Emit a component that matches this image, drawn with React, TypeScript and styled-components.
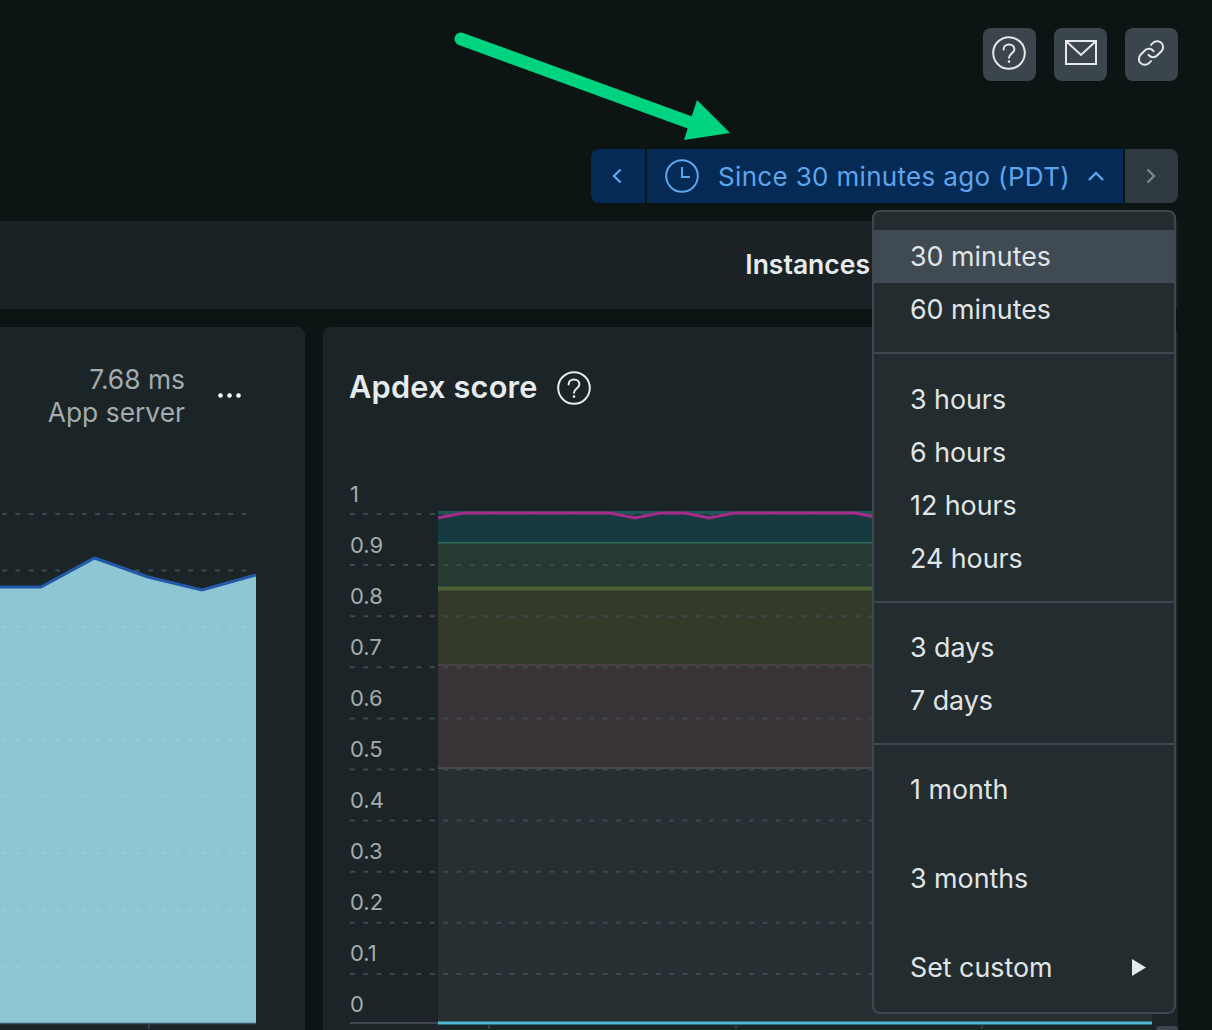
import styled, { createGlobalStyle } from "styled-components";

const GlobalStyle = createGlobalStyle`
  html, body {
    margin: 0;
    padding: 0;
    background: #0d1414;
  }
  * {
    box-sizing: border-box;
  }
`;

const Page = styled.div`
  position: relative;
  width: 1212px;
  height: 1030px;
  overflow: hidden;
  padding: 28px 34px 0 0;
  background: #0d1414;
  font-family: Inter, "Liberation Sans", sans-serif;
`;

const Toolbar = styled.div`
  display: flex;
  justify-content: flex-end;
  gap: 18px;
`;

const IconButton = styled.button`
  display: flex;
  align-items: center;
  justify-content: center;
  width: 53px;
  height: 53px;
  padding: 0 2px 3px 0;
  border: 0;
  border-radius: 8px;
  background: #3b454c;
  color: #e6e9ea;
`;

const PickerRow = styled.div`
  position: relative;
  display: flex;
  justify-content: flex-end;
  gap: 2px;
  margin-top: 68px;
  height: 54px;
`;

const Segment = styled.div<{ $dim?: boolean; $left?: boolean; $right?: boolean }>`
  display: flex;
  align-items: center;
  justify-content: center;
  width: ${(p) => (p.$left ? "54px" : "53px")};
  padding-right: 2px;
  background: ${(p) => (p.$dim ? "#2f3940" : "#042a55")};
  color: ${(p) => (p.$dim ? "#7b858a" : "#5ea5ec")};
  border-radius: ${(p) => (p.$left ? "8px 0 0 8px" : p.$right ? "0 8px 8px 0" : "0")};
`;

const RangeButton = styled.div`
  display: flex;
  align-items: center;
  width: 476px;
  padding-left: 18px;
  background: #042a55;
  color: #5ea5ec;
`;

const RangeLabel = styled.span`
  margin: 2px 17px 0 19px;
  font-size: 26px;
  letter-spacing: 0.33px;
  line-height: 52px;
  white-space: nowrap;
`;

const Subnav = styled.div`
  display: flex;
  align-items: center;
  justify-content: flex-end;
  height: 88px;
  margin-top: 18px;
  padding: 0 308px 2px 0;
  background: #1a2226;
`;

const SubnavLabel = styled.span`
  font-size: 26.5px;
  font-weight: 600;
  color: #e8ebec;
`;

const Cards = styled.div`
  display: grid;
  grid-template-columns: 305px 855px;
  gap: 18px;
  margin-top: 18px;
`;

const Card = styled.section<{ $first?: boolean }>`
  height: 720px;
  background: #1b2427;
  border-radius: ${(p) => (p.$first ? "0 8px 0 0" : "8px 8px 0 0")};
`;

const CardHeader = styled.header<{ $end?: boolean }>`
  display: flex;
  justify-content: ${(p) => (p.$end ? "flex-end" : "flex-start")};
  gap: ${(p) => (p.$end ? "33px" : "19px")};
  height: 143px;
  padding: ${(p) => (p.$end ? "36px 64px 0 0" : "42px 0 0 26px")};
  color: #e8ebec;
`;

const Metric = styled.div`
  font-size: 26.4px;
  line-height: 32.5px;
  text-align: right;
  color: #a3abae;
`;

const MoreDots = styled.svg`
  margin-top: 30px;
  flex: none;
`;

const CardTitle = styled.h2`
  margin: 0;
  font-size: 30.7px;
  letter-spacing: 0.2px;
  line-height: 36px;
  font-weight: 600;
`;

const TitleIcon = styled.span`
  display: flex;
  margin-top: 2px;
`;

const Chart = styled.svg`
  display: block;
`;

const AxisLabel = styled.text`
  font-family: Inter, "Liberation Sans", sans-serif;
  font-size: 22px;
  fill: #a3abae;
`;

const Menu = styled.div`
  position: absolute;
  top: 61px;
  right: 2px;
  width: 304px;
  height: 804px;
  background: #232c2f;
  border: 2px solid #3d4850;
  border-radius: 8px;
  overflow: hidden;
  color: #e1e5e6;
`;

const MenuGroup = styled.div<{ $last?: boolean }>`
  padding: ${(p) => (p.$last ? "0" : "18px 0 16px")};
  border-bottom: ${(p) => (p.$last ? "0" : "2px solid #3d4850")};

  &:nth-child(2) {
    padding-top: 19px;
  }
`;

const MenuItem = styled.div<{ $active?: boolean; $tall?: boolean }>`
  display: flex;
  align-items: center;
  justify-content: space-between;
  height: ${(p) => (p.$tall ? "89px" : "53px")};
  padding: 0 28px 2px 36px;
  font-size: 26.8px;
  background: ${(p) => (p.$active ? "#3f4a52" : "transparent")};
`;

const Caret = styled.svg`
  margin-top: 2px;
`;

const Arrow = styled.svg`
  position: absolute;
  top: 0;
  left: 0;
  pointer-events: none;
`;

const groups = [
  ["30 minutes", "60 minutes"],
  ["3 hours", "6 hours", "12 hours", "24 hours"],
  ["3 days", "7 days"],
];

const appGrid = [514, 570.6, 627, 683.7, 740, 796.8, 853, 910, 966.6];
const apdexLabels = ["1", "0.9", "0.8", "0.7", "0.6", "0.5", "0.4", "0.3", "0.2", "0.1", "0"];
const appArea = "M0 587H41L94.5 558L148 577L202 590L256 575";

function HelpIcon() {
  return (
    <svg width="34" height="34" viewBox="0 0 34 34" fill="none" stroke="currentColor" strokeWidth="2">
      <circle cx="17" cy="17" r="15.8" />
      <path d="M11.6 13.4c0-3 2.4-5 5.4-5s5.4 2 5.4 4.8c0 4.2-5.4 4.4-5.4 8.6" strokeLinecap="round" />
      <circle cx="17" cy="25.6" r="1.3" fill="currentColor" stroke="none" />
    </svg>
  );
}

export default function App() {
  return (
    <Page>
      <GlobalStyle />
      <Toolbar>
        <IconButton>
          <HelpIcon />
        </IconButton>
        <IconButton>
          <svg width="34" height="26" viewBox="-2 0 34 26" fill="none" stroke="currentColor" strokeWidth="2">
            <rect x="1" y="1" width="30" height="23" />
            <path d="M1 1l15 14L31 1" />
          </svg>
        </IconButton>
        <IconButton>
          <svg width="30" height="30" viewBox="0 0 24 24" fill="none" stroke="currentColor" strokeWidth="1.6" strokeLinecap="round" strokeLinejoin="round">
            <path d="M10 13.5a4.6 4.6 0 0 0 6.9.5l3.4-3.4a4.7 4.7 0 0 0-6.7-6.7l-1.6 1.6" />
            <path d="M14 10.5a4.6 4.6 0 0 0-6.9-.5l-3.4 3.4a4.7 4.7 0 0 0 6.7 6.7l1.6-1.6" />
          </svg>
        </IconButton>
      </Toolbar>

      <PickerRow>
        <Segment $left>
          <svg width="12" height="18" viewBox="0 0 12 18" fill="none" stroke="currentColor" strokeWidth="2.4">
            <path d="M9.5 2.5L3 9l6.5 6.5" />
          </svg>
        </Segment>
        <RangeButton>
          <svg width="34" height="34" viewBox="0 0 34 34" fill="none" stroke="currentColor" strokeWidth="2">
            <circle cx="17" cy="17" r="15.8" />
            <path d="M17 8v10h8" />
          </svg>
          <RangeLabel>Since 30 minutes ago (PDT)</RangeLabel>
          <svg width="18" height="12" viewBox="0 0 18 12" fill="none" stroke="currentColor" strokeWidth="2.4">
            <path d="M2 10l7-7 7 7" />
          </svg>
        </RangeButton>
        <Segment $dim $right>
          <svg width="12" height="18" viewBox="0 0 12 18" fill="none" stroke="currentColor" strokeWidth="2.4">
            <path d="M2.5 2.5L9 9l-6.5 6.5" />
          </svg>
        </Segment>

        <Menu>
          {groups.map((group) => (
            <MenuGroup key={group[0]}>
              {group.map((item) => (
                <MenuItem key={item} $active={item === "30 minutes"}>
                  {item}
                </MenuItem>
              ))}
            </MenuGroup>
          ))}
          <MenuGroup $last>
            <MenuItem $tall>1 month</MenuItem>
            <MenuItem $tall>3 months</MenuItem>
            <MenuItem $tall>
              Set custom
              <Caret width="14" height="17" viewBox="0 0 14 17">
                <path d="M0 0l14 8.5L0 17z" fill="#e6e9ea" />
              </Caret>
            </MenuItem>
          </MenuGroup>
        </Menu>
      </PickerRow>

      <Subnav>
        <SubnavLabel>Instances</SubnavLabel>
      </Subnav>

      <Cards>
        <Card $first>
          <CardHeader $end>
            <Metric>
              7.68 ms
              <br />
              App server
            </Metric>
            <MoreDots width="23" height="5" viewBox="0 0 23 5">
              <circle cx="2.5" cy="2.5" r="2.3" fill="#fff" />
              <circle cx="11.5" cy="2.5" r="2.3" fill="#fff" />
              <circle cx="20.5" cy="2.5" r="2.3" fill="#fff" />
            </MoreDots>
          </CardHeader>
          <Chart width="305" height="560" viewBox="0 470 305 560">
            {appGrid.map((y) => (
              <line key={y} x1="2" x2="248" y1={y} y2={y} stroke="#3d4850" strokeWidth="2" strokeDasharray="5 8.3" />
            ))}
            <path d={`${appArea}V1023H0Z`} fill="#8ec6d3" />
            {appGrid.slice(2).map((y) => (
              <line key={y} x1="2" x2="248" y1={y} y2={y} stroke="#98ccd8" strokeWidth="2" strokeDasharray="5 8.3" />
            ))}
            <path d={appArea} fill="none" stroke="#2458a8" strokeWidth="3" />
            <line x1="0" x2="256" y1="1023.5" y2="1023.5" stroke="#3d5a66" strokeWidth="1.5" />
            <line x1="149" x2="149" y1="1024" y2="1029" stroke="#3d4850" strokeWidth="1.5" />
          </Chart>
        </Card>

        <Card>
          <CardHeader>
            <CardTitle>Apdex score</CardTitle>
            <TitleIcon>
              <HelpIcon />
            </TitleIcon>
          </CardHeader>
          <Chart width="855" height="560" viewBox="323 470 855 560">
            <rect x="438" y="767" width="714" height="256" fill="#282f33" />
            <rect x="438" y="511" width="714" height="3" fill="#1b5659" />
            <rect x="438" y="514" width="714" height="29" fill="#153a3f" />
            <rect x="438" y="543" width="714" height="44" fill="#263a32" />
            <rect x="438" y="590" width="714" height="75" fill="#343a29" />
            <rect x="438" y="665" width="714" height="102" fill="#383337" />
            <rect x="438" y="542" width="714" height="1.5" fill="#2d6a5c" />
            <rect x="438" y="586.5" width="714" height="4" fill="#4f6138" />
            <rect x="438" y="664" width="714" height="2" fill="#4b4040" />
            <rect x="438" y="767" width="714" height="2" fill="#4a4649" />
            {apdexLabels.slice(0, 10).map((_, i) => {
              const y = 514 + i * 51.1;
              return <line key={y} x1="350" x2="1152" y1={y} y2={y} stroke="#3d4850" strokeWidth="2" strokeDasharray="5 8.3" />;
            })}
            <polyline
              points="438,518 463,513 610,513 635,518 660,513 685,513 709,518 734,513 855,513 880,518 905,513 1152,513"
              fill="none"
              stroke="#a62b8b"
              strokeWidth="3"
            />
            {apdexLabels.map((label, i) => (
              <AxisLabel key={label} x="350" y={502 + i * 51}>
                {label}
              </AxisLabel>
            ))}
            <line x1="350" x2="438" y1="1023" y2="1023" stroke="#3d4850" strokeWidth="2" />
            <line x1="438" x2="1152" y1="1023" y2="1023" stroke="#4fb8d5" strokeWidth="3" />
            {[489, 736, 982].map((x) => (
              <line key={x} x1={x} x2={x} y1="1024.5" y2="1029" stroke="#3d4850" strokeWidth="1.5" />
            ))}
            <rect x="1156" y="1026" width="22" height="12" rx="4" fill="#3d4850" />
          </Chart>
        </Card>
      </Cards>

      <Arrow width="1212" height="1030" viewBox="0 0 1212 1030">
        <line x1="461" y1="39" x2="705" y2="128" stroke="#00d37f" strokeWidth="13" strokeLinecap="round" />
        <polygon points="697,100 730,133 684,140" fill="#00d37f" />
      </Arrow>
    </Page>
  );
}
